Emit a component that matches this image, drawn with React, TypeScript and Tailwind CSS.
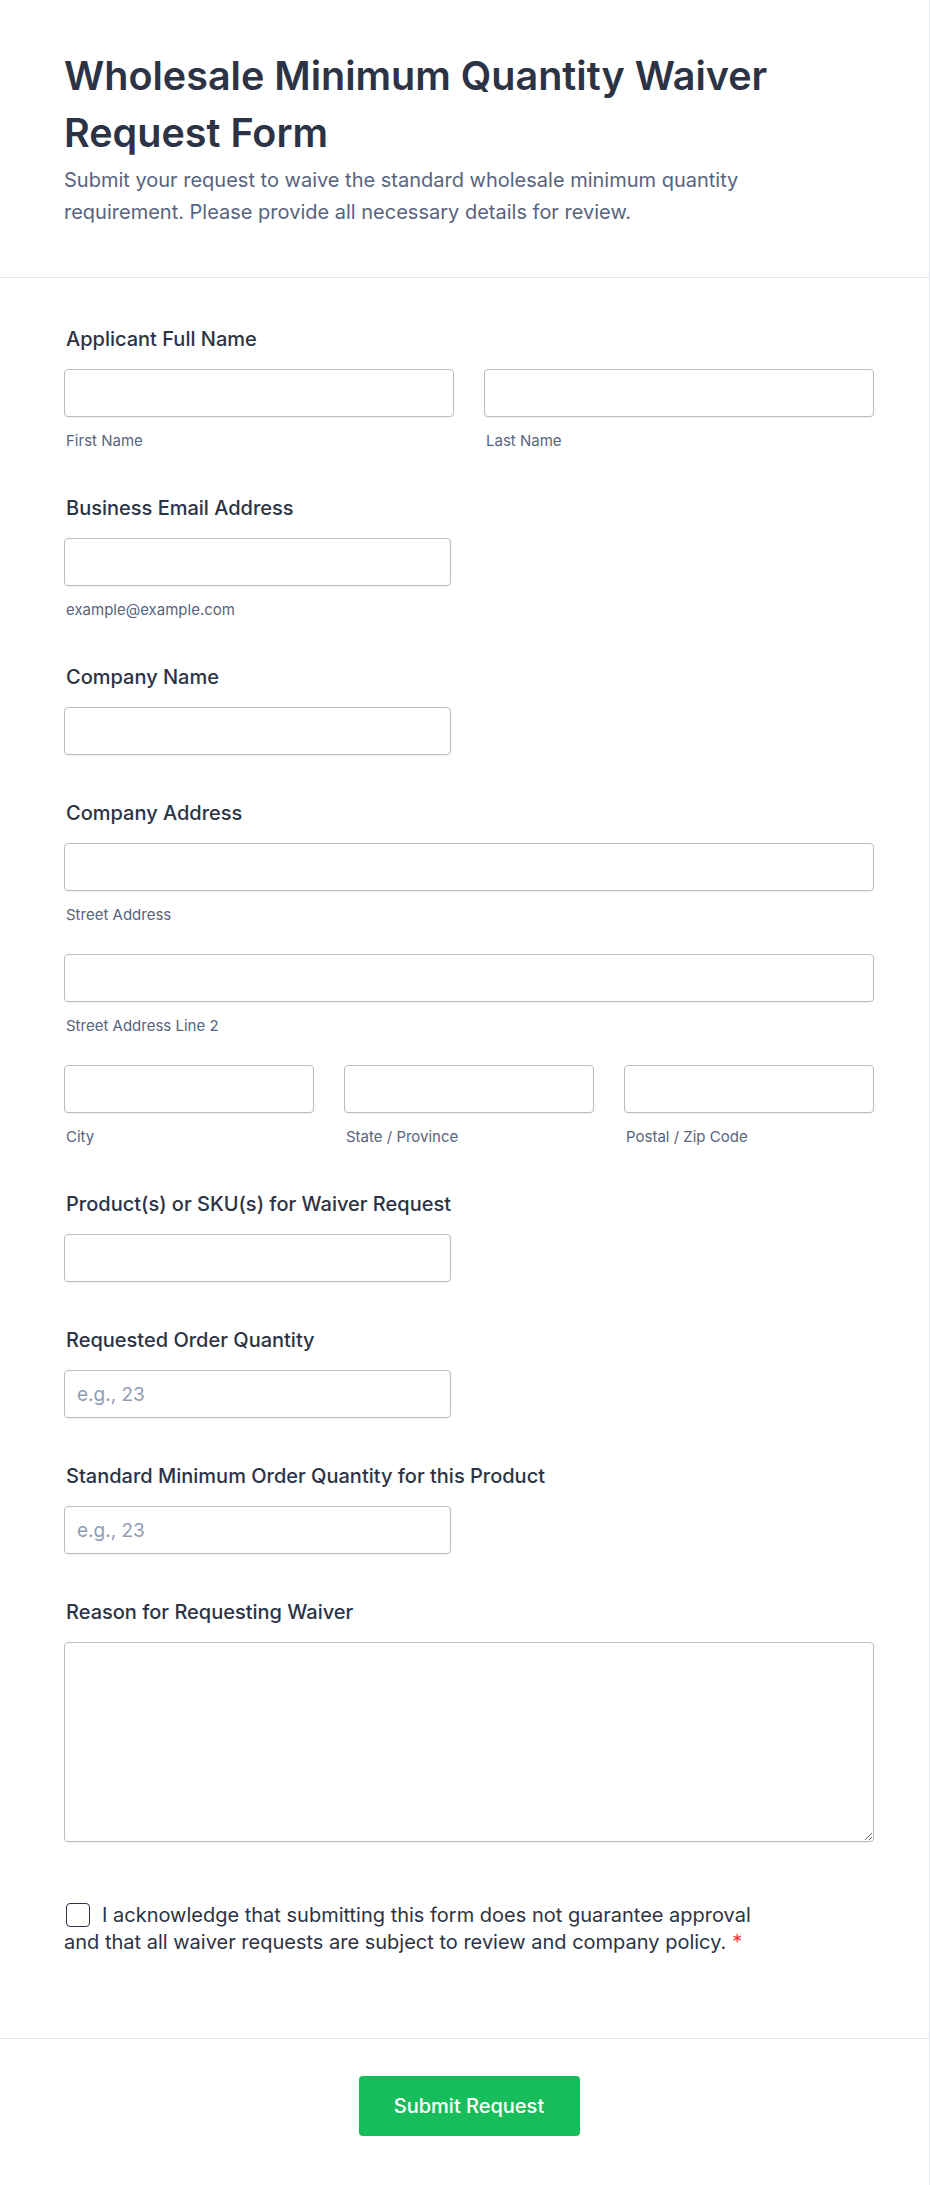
import React from "react";

const labelCls = "block pl-[2px] text-[20px] leading-[24px] font-medium text-[#2c3345]";
const subCls = "block mt-[15px] pl-[2px] text-[15px] leading-[18px] text-[#57647e]";
const inputCls =
  "block w-full h-12 rounded-[4px] border border-[#b8bdc9] bg-white px-3 text-[19px] text-[#2c3345] placeholder:text-[#8f9bb3] shadow-[0_1px_1px_rgba(43,51,69,0.06)] outline-none";

function Field({ label, children }: { label: string; children: React.ReactNode }) {
  return (
    <div>
      <label className={labelCls}>{label}</label>
      <div className="mt-[18px]">{children}</div>
    </div>
  );
}

function Input({ sub, placeholder, half }: { sub?: string; placeholder?: string; half?: boolean }) {
  return (
    <div className={half ? "w-[387px]" : "w-full"}>
      <input type="text" placeholder={placeholder} className={inputCls} />
      {sub && <span className={subCls}>{sub}</span>}
    </div>
  );
}

export default function App() {
  return (
    <div className="min-h-screen bg-white border-r border-[#e3e5ee] font-['Inter',sans-serif]">
      {/* Header */}
      <header className="pl-[64px] pr-[55px] pt-[48px] pb-[49px] border-b border-[#e3e5ee]">
        <h1 className="max-w-[740px] text-[39.5px] leading-[57px] font-semibold text-[#2c3345]">
          Wholesale Minimum Quantity Waiver Request Form
        </h1>
        <p className="mt-[2px] max-w-[740px] text-[20px] leading-[32px] text-[#57647e]">
          Submit your request to waive the standard wholesale minimum quantity requirement. Please provide all
          necessary details for review.
        </p>
      </header>

      {/* Form fields */}
      <form className="pl-[64px] pr-[55px] pt-[49px] pb-[82px] flex flex-col gap-[46px]">
        <Field label="Applicant Full Name">
          <div className="grid grid-cols-2 gap-[30px]">
            <Input sub="First Name" />
            <Input sub="Last Name" />
          </div>
        </Field>

        <Field label="Business Email Address">
          <Input half sub="example@example.com" />
        </Field>

        <Field label="Company Name">
          <Input half />
        </Field>

        <Field label="Company Address">
          <div className="flex flex-col gap-[30px]">
            <Input sub="Street Address" />
            <Input sub="Street Address Line 2" />
            <div className="grid grid-cols-3 gap-[30px]">
              <Input sub="City" />
              <Input sub="State / Province" />
              <Input sub="Postal / Zip Code" />
            </div>
          </div>
        </Field>

        <Field label="Product(s) or SKU(s) for Waiver Request">
          <Input half />
        </Field>

        <Field label="Requested Order Quantity">
          <Input half placeholder="e.g., 23" />
        </Field>

        <Field label="Standard Minimum Order Quantity for this Product">
          <Input half placeholder="e.g., 23" />
        </Field>

        <Field label="Reason for Requesting Waiver">
          <textarea className="block w-full h-[200px] rounded-[4px] border border-[#b8bdc9] bg-white px-3 py-2 text-[19px] shadow-[0_1px_1px_rgba(43,51,69,0.06)] outline-none" />
        </Field>

        <div className="mt-[14px] max-w-[700px] text-[20px] leading-[27px] text-[#2c3345]">
          <span className="inline-block align-[-5px] mr-[12px] ml-[2px] w-[24px] h-[24px] rounded-[4px] border-[1.5px] border-[#2c3345] bg-white" />
          I acknowledge that submitting this form does not guarantee approval and that all waiver requests are subject
          to review and company policy.
          <span className="ml-[6px] text-[#f23a3c]">*</span>
        </div>
      </form>

      {/* Footer */}
      <footer className="pl-[64px] pr-[55px] pt-[37px] pb-[49px] border-t border-[#e3e5ee] flex justify-center">
        <button
          type="button"
          className="w-[221px] h-[60px] rounded-[4px] bg-[#18bd5b] text-white text-[20px] font-medium"
        >
          Submit Request
        </button>
      </footer>
    </div>
  );
}
